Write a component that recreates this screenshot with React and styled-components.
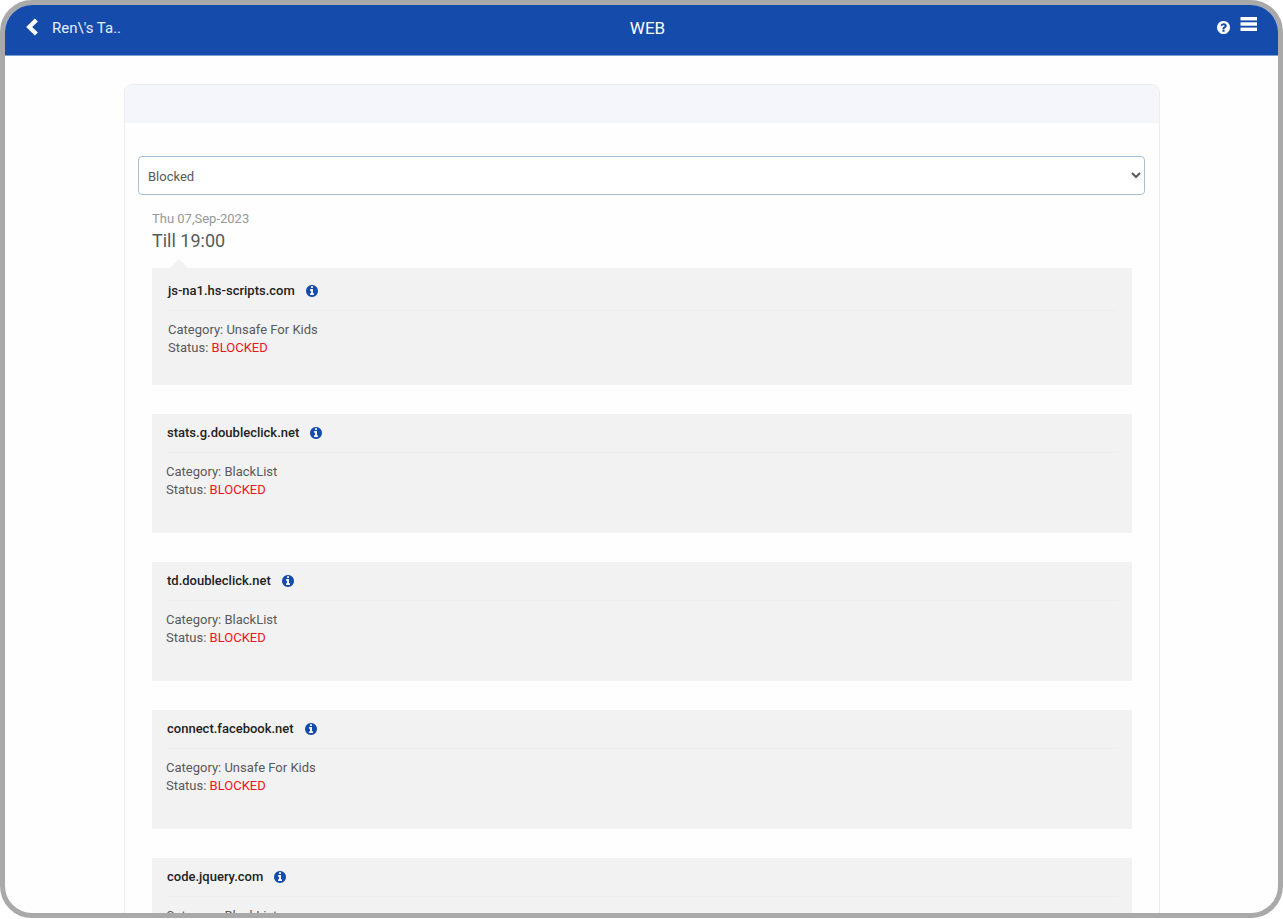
import React from "react";
import styled, { createGlobalStyle } from "styled-components";

const GlobalStyle = createGlobalStyle`
  * { box-sizing: border-box; }
  body {
    margin: 0;
    background: #fff;
    color: #58595b;
    font-family: Roboto, "Liberation Sans", sans-serif;
    font-size: 13px;
    line-height: 18px;
  }
  h1, h2, h3, p { margin: 0; }
`;

const Frame = styled.div`
  height: calc(100vh - 1px);
  display: flex;
  flex-direction: column;
  overflow: hidden;
  border: 5px solid #a9a9a9;
  border-radius: 32px;
  background: #fefefe;
`;

const TopBar = styled.header`
  flex: none;
  display: grid;
  grid-template-columns: 1fr auto 1fr;
  align-items: center;
  height: 51px;
  padding: 0 20px 4px;
  border-bottom: 1px solid #7f9fd0;
  background: #154baa;
  color: #fff;
`;

const BackLink = styled.a`
  display: flex;
  align-items: center;
  gap: 13px;
  color: #e6eefb;
  font-size: 15px;
  text-decoration: none;

  svg { color: #fff; margin-bottom: 2px; }
`;

const Title = styled.h1`
  padding-left: 12px;
  font-size: 17px;
  font-weight: 400;
`;

const Actions = styled.div`
  display: flex;
  justify-content: flex-end;
  align-items: center;
  gap: 10px;
`;

const IconButton = styled.button`
  display: flex;
  padding: 0;
  border: 0;
  background: none;
  color: ${(p) => p.$color || "#fff"};
  cursor: pointer;
`;

const HelpButton = styled(IconButton)`
  padding-bottom: 2px;
`;

const MenuButton = styled(IconButton)`
  padding-bottom: 8px;
`;

const Content = styled.main`
  flex: 1;
  min-height: 0;
  overflow: hidden;
  padding: 28px 118px 0 119px;
`;

const Card = styled.section`
  border: 1px solid #ececee;
  border-radius: 8px;
`;

const CardHead = styled.div`
  height: 38px;
  border-radius: 7px 7px 0 0;
  background: #f5f6fb;
`;

const CardBody = styled.div`
  padding: 33px 14px 30px 13px;
`;

const Filter = styled.select`
  display: block;
  width: 100%;
  height: 39px;
  padding: 1px 1px 0 5px;
  border: 1px solid #a9c0d2;
  border-radius: 4px;
  background: #fff;
  color: #58595b;
  font: inherit;
`;

const Log = styled.div`
  padding: 15px 13px 0 14px;
`;

const DateText = styled.p`
  color: #97989a;
`;

const Till = styled.h2`
  font-size: 18px;
  line-height: 26px;
  font-weight: 400;
`;

const Pointer = styled.svg`
  display: block;
  margin: 5px 0 0 18px;
`;

const Entries = styled.div`
  display: flex;
  flex-direction: column;
  gap: 29px;
`;

const Entry = styled.article`
  min-height: ${(p) => (p.$first ? 117 : 119)}px;
  padding: ${(p) => (p.$first ? "14px 16px 0" : "10px 14px 0")};
  background: #f2f2f2;
`;

const EntryHead = styled.div`
  display: flex;
  align-items: center;
  gap: 11px;
  padding: 0 1px 10px;
  padding-left: ${(p) => (p.$first ? 0 : 1)}px;
  margin-bottom: 10px;
  border-bottom: 1px solid #eeeeee;
`;

const Domain = styled.h3`
  color: #222;
  font-size: 13px;
  font-weight: 500;
`;

const Status = styled.span`
  color: #ee1420;
`;

const disc =
  "M1536 896q0 209-103 385.5t-279.5 279.5-385.5 103-385.5-103-279.5-279.5-103-385.5 103-385.5 279.5-279.5 385.5-103 385.5 103 279.5 279.5 103 385.5z";

const InfoIcon = () => (
  <svg width="12" height="12" viewBox="0 128 1536 1536" fill="currentColor" fillRule="evenodd">
    <path
      d={
        "M1024 1376v-160q0-14-9-23t-23-9h-96v-512q0-14-9-23t-23-9h-320q-14 0-23 9t-9 23v160q0 14 9 23t23 9h96v320h-96q-14 0-23 9t-9 23v160q0 14 9 23t23 9h448q14 0 23-9t9-23zM896 480v-160q0-14-9-23t-23-9h-192q-14 0-23 9t-9 23v160q0 14 9 23t23 9h192q14 0 23-9t9-23z" +
        disc
      }
    />
  </svg>
);

const HelpIcon = () => (
  <svg width="13" height="13" viewBox="0 128 1536 1536" fill="currentColor" fillRule="evenodd">
    <path
      d={
        "M896 1376v-192q0-14-9-23t-23-9h-192q-14 0-23 9t-9 23v192q0 14 9 23t23 9h192q14 0 23-9t9-23zM1152 704q0-88-55.5-163t-138.5-116-170-41q-243 0-371 213-15 24 8 42l132 100q7 6 19 6 16 0 25-12 53-68 86-92 34-24 86-24 48 0 85.5 26t37.5 59q0 38-20 61t-68 45q-63 28-115.5 86.5t-52.5 125.5v36q0 14 9 23t23 9h192q14 0 23-9t9-23q0-19 21.5-49.5t54.5-49.5q32-18 49-28.5t46-35 44.5-48 28-60.5 12.5-81z" +
        disc
      }
    />
  </svg>
);

const entries = [
  { domain: "js-na1.hs-scripts.com", category: "Unsafe For Kids" },
  { domain: "stats.g.doubleclick.net", category: "BlackList" },
  { domain: "td.doubleclick.net", category: "BlackList" },
  { domain: "connect.facebook.net", category: "Unsafe For Kids" },
  { domain: "code.jquery.com", category: "BlackList" },
];

export default function App() {
  return (
    <>
      <GlobalStyle />
      <Frame>
        <TopBar>
          <BackLink href="#back">
            <svg width="14" height="18" viewBox="0 0 14 18" fill="currentColor">
              <path d="M9.8 0.5 12.9 3.4 7.2 9l5.7 5.6-3.1 2.9L1.2 9z" />
            </svg>
            {"Ren\\'s Ta.."}
          </BackLink>
          <Title>WEB</Title>
          <Actions>
            <HelpButton type="button" aria-label="Help">
              <HelpIcon />
            </HelpButton>
            <MenuButton type="button" aria-label="Menu">
              <svg width="18" height="14" viewBox="0 0 18 14" fill="currentColor">
                <rect x="0.5" width="16.5" height="3.4" />
                <rect x="0.5" y="5.3" width="16.5" height="3.4" />
                <rect x="0.5" y="10.6" width="16.5" height="3.4" />
              </svg>
            </MenuButton>
          </Actions>
        </TopBar>
        <Content>
          <Card>
            <CardHead />
            <CardBody>
              <Filter aria-label="Status filter" defaultValue="blocked">
                <option value="blocked">Blocked</option>
              </Filter>
              <Log>
                <DateText>Thu 07,Sep-2023</DateText>
                <Till>Till 19:00</Till>
                <Pointer width="18" height="9" viewBox="0 0 18 9">
                  <path d="M0 9 9 0l9 9z" fill="#f2f2f2" />
                </Pointer>
                <Entries>
                  {entries.map((e, i) => (
                    <Entry key={e.domain} $first={i === 0}>
                      <EntryHead $first={i === 0}>
                        <Domain>{e.domain}</Domain>
                        <IconButton type="button" $color="#154baa" aria-label={`About ${e.domain}`}>
                          <InfoIcon />
                        </IconButton>
                      </EntryHead>
                      <p>Category: {e.category}</p>
                      <p>
                        Status: <Status>BLOCKED</Status>
                      </p>
                    </Entry>
                  ))}
                </Entries>
              </Log>
            </CardBody>
          </Card>
        </Content>
      </Frame>
    </>
  );
}
